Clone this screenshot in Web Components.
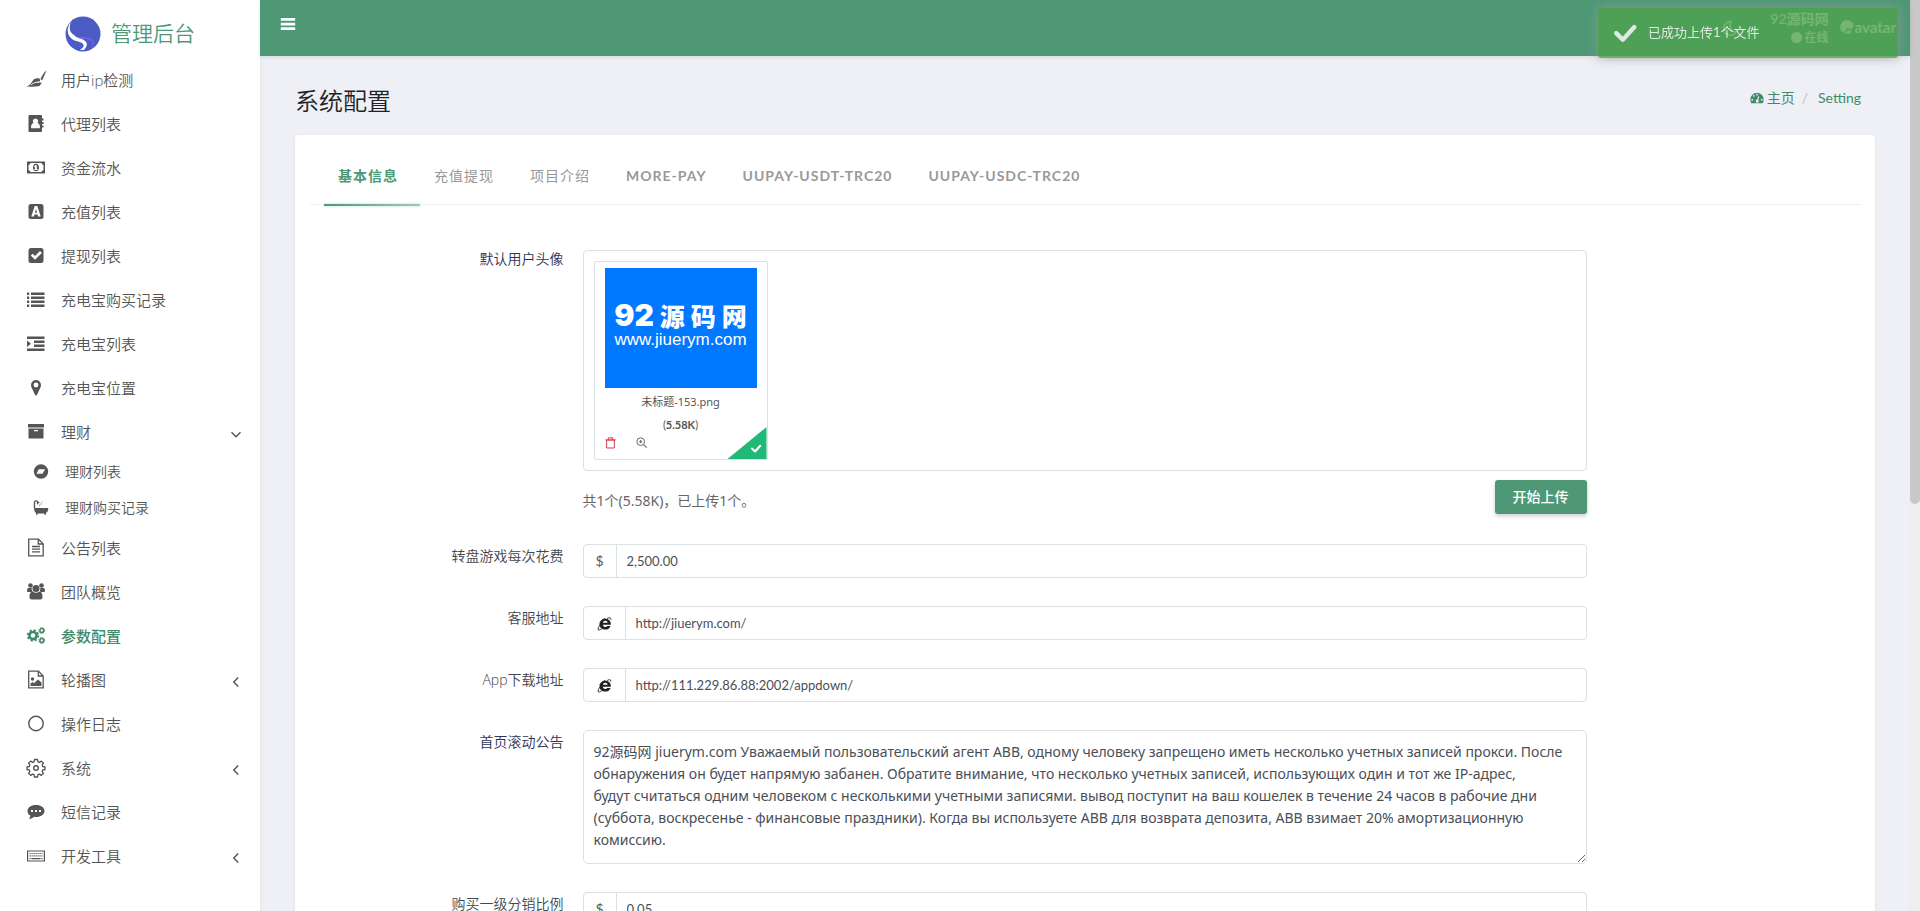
<!DOCTYPE html>
<html lang="zh-CN">
<head>
<meta charset="utf-8">
<meta name="viewport" content="width=device-width, initial-scale=1">
<title>系统配置</title>
<style>
:root {
  --primary: #4e9876;
  --link: #3f8a68;
  --text: #555;
  --line: #d9e1e4;
  --page: #eff0f6;
  --ui: "Lato", "Noto Sans CJK SC", sans-serif;
  --cyr: "Noto Sans", "Noto Sans CJK SC", sans-serif;
  --thin: "Open Sans", "Noto Sans CJK SC", sans-serif;
}
html, body { height: 100%; margin: 0; }
body { background: var(--page); color: var(--text); font: 14px/20px var(--ui); overflow: hidden; }
</style>
</head>
<body>
<admin-app></admin-app>

<script>
const ICONS = {
  lizard: '<path d="M0 16.500c3.500-.8 5-3 6.500-5.500C8 8.500 10.500 8 13.500 8.500c.5 1 .7 1.800.5 2.800l-4 1.200c2 0 4.500-.2 6 .5-1 .8-1.500 1.500-2.500 3-4 .8-9 .7-13.500.5zM14.500 9c1.500-3 3-6.500 6-8.500-1.500 3-2.800 7-4.500 10z"/><path d="M5 15c2-2 5-3 8-3" stroke="#fff" fill="none"/>',
  contact: '<path fill-rule="evenodd" d="M3.500 1H15a1 1 0 0 1 1 1v2.500h1.500v2H16v1.500h1.500v2H16v1.500h1.500v2H16V17a1 1 0 0 1-1 1H3.500a1 1 0 0 1-1-1V2a1 1 0 0 1 1-1zM9.500 4.500a2.700 2.700 0 0 0-2 4.500C6 9.500 5 11 5 13.500q0 .8.8.8h7.400q.8 0 .8-.8c0-2.500-1-4-2.500-4.500a2.700 2.700 0 0 0-2-4.500z"/>',
  money: '<path fill-rule="evenodd" d="M1 3.500h18v12H1zM4.500 5A2.500 2.500 0 0 1 2.500 7v5a2.500 2.500 0 0 1 2 2h11a2.500 2.500 0 0 1 2-2V7a2.500 2.500 0 0 1-2-2z"/><path fill-rule="evenodd" d="M10 5.800c1.900 0 3 1.600 3 3.700s-1.100 3.700-3 3.700-3-1.600-3-3.700 1.100-3.700 3-3.700zM9.700 7 8 8.300v.9l1-.2v2.200h-.8v.8h3.500v-.8h-.9V7z"/>',
  letter: '<path fill-rule="evenodd" d="M5 2h10a2.500 2.500 0 0 1 2.500 2.500v10A2.500 2.500 0 0 1 15 17H5a2.500 2.500 0 0 1-2.500-2.500v-10A2.500 2.500 0 0 1 5 2zM8.700 4 5.300 14.500h2.600l.5-2h3.200l.5 2h2.600L11.300 4zM10 7l1.100 3.800H8.900z"/>',
  check: '<path fill-rule="evenodd" d="M5 2h10a2.500 2.500 0 0 1 2.500 2.500v10A2.500 2.500 0 0 1 15 17H5a2.500 2.500 0 0 1-2.500-2.500v-10A2.500 2.500 0 0 1 5 2zM14 5l-5 5-2.300-2.300L4.800 9.600 9 13.800l6.900-6.900z"/>',
  list: '<path d="M1 2.500h2.200v2.400H1zM5 2.500h13.500v2.400H5zM1 6.500h2.200v2.400H1zM5 6.500h13.500v2.400H5zM1 10.500h2.200v2.400H1zM5 10.500h13.500v2.400H5zM1 14.500h2.200v2.400H1zM5 14.500h13.500v2.400H5z"/>',
  indent: '<path d="M1 2.500h17.500v2.400H1zM8 6.500h10.500v2.400H8zM8 10.500h10.500v2.400H8zM1 14.500h17.500v2.400H1zM1 6.500l4 3.200-4 3.200z"/>',
  pin: '<path fill-rule="evenodd" d="M10 2a5 5 0 0 1 5 5c0 2-1 3-1.500 4.500L10.900 17q-.9 1.200-1.800 0L6.500 11.500C6 10 5 9 5 7a5 5 0 0 1 5-5zm0 2.500a2.400 2.400 0 1 0 0 4.900 2.400 2.400 0 0 0 0-4.900z"/>',
  archive: '<path d="M2 2h16v3.500H2z"/><path fill-rule="evenodd" d="M2.500 6.500h15v10h-15zM8 8v1.200h4V8z"/>',
  compass: '<path fill-rule="evenodd" d="M10 1.500a8 8 0 1 0 0 16 8 8 0 0 0 0-16zM7.500 7h7l-2.800 5H5z"/>',
  bath: '<path d="M2 10h16v1.500c0 2-1.200 3.500-2.500 4v2h-1.700v-1.500H6.200v1.500H4.500v-2C3.200 15 2.500 13.500 2.500 11.500zM2 10V4c0-3 4-3.500 5-1l1.700.4-2.900 3C5 5 5.200 4 5.800 3.200 5 2.200 3.500 2.600 3.500 4v6z"/><path d="M8 6.500h1v1H8zM9.500 5h1v1h-1zM10.500 3h1v1h-1z"/>',
  file: '<path d="M2.700 1.200h9.800l4.700 4.700v11.900H2.700zM12.300 1.500V6H17M6 8.500h8M6 11.200h8M6 13.900h8" fill="none" stroke="currentColor" stroke-width="1.300"/>',
  users: '<circle cx="4.500" cy="3.500" r="2.300"/><circle cx="15.500" cy="3.500" r="2.300"/><circle cx="10" cy="6.500" r="3.500"/><path d="M1 9c0-2 .5-3 1.500-3h3.200c0 2 .3 3 1.300 4H2q-1 0-1-1zM19 9c0-2-.5-3-1.500-3h-3.200c0 2-.3 3-1.300 4h5q1 0 1-1zM3.500 15c0-3 .8-5.500 3.300-5.500 2 1.600 4.400 1.600 6.400 0 2.500 0 3.300 2.500 3.300 5.500q0 2.500-2.500 2.500H6q-2.500 0-2.500-2.500z"/>',
  cogs: '<circle cx="7" cy="9.500" r="3.600" fill="none" stroke="currentColor" stroke-width="2.500"/><circle cx="7" cy="9.500" r="5.300" fill="none" stroke="currentColor" stroke-width="1.800" stroke-dasharray="2.200 1.960"/><circle cx="15.800" cy="4.500" r="1.900" fill="none" stroke="currentColor" stroke-width="1.500"/><circle cx="15.800" cy="4.500" r="2.900" fill="none" stroke="currentColor" stroke-dasharray="1.300 .98"/><circle cx="15.800" cy="14.500" r="1.900" fill="none" stroke="currentColor" stroke-width="1.500"/><circle cx="15.800" cy="14.500" r="2.900" fill="none" stroke="currentColor" stroke-dasharray="1.300 .98"/>',
  image: '<path d="M2.700 1.200h9.800l4.700 4.700v11.900H2.700zM12.300 1.500V6H17" fill="none" stroke="currentColor" stroke-width="1.300"/><circle cx="6.500" cy="9" r="1.700"/><path d="M4.500 16v-2.500l2-1.500 1.500 1.300L12 9.500l3.500 3V16z"/>',
  circle: '<circle cx="10" cy="9.500" r="7.200" fill="none" stroke="currentColor" stroke-width="1.400"/>',
  gear: '<path d="M8.500 1.500h3l.5 2.300 1.300.6 2-1.300 2.100 2.100-1.300 2 .6 1.300 2.300.5v2.500l-2.300.5-.6 1.300 1.300 2-2.100 2.100-2-1.300-1.300.6-.5 2.300h-3L8 16.700l-1.300-.6-2 1.300-2.100-2.100 1.300-2-.6-1.300L1 11.500V9l2.300-.5.6-1.300-1.300-2 2.100-2.100 2 1.300L8 3.800z" fill="none" stroke="currentColor" stroke-width="1.300" stroke-linejoin="round"/><circle cx="10" cy="10" r="2.300" fill="none" stroke="currentColor" stroke-width="1.400"/>',
  comment: '<path fill-rule="evenodd" d="M10 3c5 0 8.500 2.600 8.500 6s-3.500 6-8.500 6q-1 0-2-.2C6.500 16.200 4.500 17 2.800 17c1-1 1.500-2 1.500-3.400C2.500 12.500 1.500 11 1.500 9 1.500 5.600 5 3 10 3zM5 8v2h2V8zm4 0v2h2V8zm4 0v2h2V8z"/>',
  keyboard: '<path d="M1.600 5h16.800v10H1.600z" fill="none" stroke="currentColor" stroke-width="1.200"/><path d="M3.500 7.500h13M3.500 9.800h13" stroke="currentColor" stroke-width="1.200" stroke-dasharray="1.200 .8"/><path d="M3.500 12h1.200v1.200H3.500zM5.500 12h9v1.200h-9zM15.300 12h1.200v1.200h-1.200z"/>',
  down: '<path d="M5 8l5 5 5-5" fill="none" stroke="currentColor" stroke-width="1.600"/>',
  left: '<path d="M12.500 5l-5 5 5 5" fill="none" stroke="currentColor" stroke-width="1.600"/>',
  bars: '<path d="M1 2.500h18v3.500H1zM1 8.300h18v3.500H1zM1 14h18v3.500H1z"/>',
  tick: '<path d="M2 11l6 6L18.500 5.500" fill="none" stroke="currentColor" stroke-width="4" stroke-linecap="round" stroke-linejoin="round"/>',
  moon: '<path d="M11 2a8.500 8.500 0 1 0 7 12.500C12 16 8 9 11 2z" fill="none" stroke="currentColor" stroke-width="2"/>',
  dot: '<circle cx="10" cy="10" r="10"/>',
  dash: '<path fill-rule="evenodd" d="M10 2.500a9.500 9.500 0 0 1 9.500 9.500q0 3-1.500 5.500H2Q.5 15 .5 12A9.500 9.500 0 0 1 10 2.500zM9 4v2.600h2V4zM4 6.700 5.800 8.500 7 7 5.300 5.300zM2 11.500v2.200h2.500v-2.200zM15.500 11.500v2.200H18v-2.200zM11.800 7.500l-1.600 4.800a2.200 2.200 0 1 0 1.500.4l1.600-4.800z"/>',
  trash: '<path d="M3 5.500h14V20H3zM.5 5.300h19M6 5V1.500h8V5" fill="none" stroke="currentColor" stroke-width="1.800"/>',
  zoom: '<circle cx="8.500" cy="8.500" r="7" fill="none" stroke="currentColor" stroke-width="1.800"/><path d="M13.500 13.500l6 6M8.500 5.500v6M5.500 8.500h6" stroke="currentColor" stroke-width="2" fill="none"/>',
  broken: '<path d="M10 1.500a8.500 8.500 0 0 1 8.500 8L15 13l-4-2-5 6.500A8.500 8.500 0 0 1 10 1.500z"/><path d="M7 18l5-5 4 2.500-3 3z"/>',
  ie: '<path d="M18.500 11.500H8c.1 2 1.200 3 3 3 1.300 0 2.100-.4 2.600-1.300h4.500C17 16.500 14.500 18 11 18c-4.500 0-7.500-2.600-7.500-6.800 0-4.500 3.200-7.700 7.700-7.700 4.800 0 7.500 3.200 7.300 8zM14.100 9c-.2-1.700-1.300-2.600-3-2.600S8.300 7.300 8 9z"/><path d="M13.500 3.300c3-1.700 5.500-1.300 5 1.700M4.500 11C1.500 15.500.6 18.500 2.300 18.700c1 .1 2.500-.6 4-1.700M3.500 9.500C5 6.500 8 4 11 3.500" fill="none" stroke="currentColor" stroke-width="1.200"/>'
};

const define = (name, html, setup) => {
  const template = document.createElement('template');
  template.innerHTML = html;
  customElements.define(name, class extends HTMLElement {
    connectedCallback() {
      if (this.shadowRoot) return;
      this.attachShadow({ mode: 'open' }).append(template.content.cloneNode(true));
      if (setup) setup(this, this.shadowRoot);
    }
  });
};

define('ui-icon', `
<style>
:host { display: inline-block; width: 20px; height: 20px; flex: none; }
svg { display: block; width: 100%; height: 100%; overflow: visible; }
</style>
<svg viewBox="0 0 20 20" fill="currentColor" aria-hidden="true"></svg>`,
(host, root) => { root.querySelector('svg').innerHTML = ICONS[host.getAttribute('name')] || ''; });

define('nav-item', `
<style>
:host { display: block; }
a { display: flex; align-items: center; height: 44px; padding: 0 15px 0 26px; color: var(--text); text-decoration: none; font-family: var(--thin); font-size: 15px; font-weight: 350; }
.label { flex: 1; margin-left: 15px; }
.arrow { width: 18px; height: 18px; margin-top: 4px; }
:host([sub]) a { height: 36px; padding-left: 32px; font-size: 14px; }
:host([sub]) .main { width: 18px; height: 18px; }
:host([active]) a { color: var(--link); font-weight: 500; }
</style>
<a href="#"><span class="label"><slot></slot></span></a>`,
(host, root) => {
  const link = root.querySelector('a');
  const icon = (name, cls) => {
    const el = document.createElement('ui-icon');
    el.className = cls;
    el.setAttribute('name', name);
    return el;
  };
  link.prepend(icon(host.getAttribute('icon'), 'main'));
  if (host.hasAttribute('arrow')) link.append(icon(host.getAttribute('arrow'), 'arrow'));
});

define('app-sidebar', `
<style>
:host { display: block; background: #fff; box-shadow: 0 0 4px rgba(0,0,0,.08); overflow: hidden; }
.brand { display: flex; align-items: center; justify-content: center; gap: 10px; height: 58px; padding: 7px 0 0; box-sizing: border-box; color: var(--primary); font-size: 21px; line-height: 30px; font-weight: 350; text-decoration: none; }
.brand svg { width: 36px; height: 36px; margin-top: 3px; }
nav { display: block; }
</style>
<a class="brand" href="#">
  <svg viewBox="0 0 36 36" aria-hidden="true"><circle cx="18" cy="18" r="17.500" fill="#4b5cc4"/><path d="M6 20c5 4 10 2 16 3 6 1 7 4 4 9 4-3 4-9-2-10-6-2-14 1-18-6z" fill="#7b61f0"/><path d="M6 6C1 12 2 19 7 23c4 3 9 2 11 5 2 3-1 4-3 6h4c3-3 4-7 1-9-3-3-8-2-11-6C4 16 4 11 6 6z" fill="#fff"/></svg>
  <span>管理后台</span>
</a>
<nav aria-label="主菜单">
  <nav-item icon="lizard">用户ip检测</nav-item>
  <nav-item icon="contact">代理列表</nav-item>
  <nav-item icon="money">资金流水</nav-item>
  <nav-item icon="letter">充值列表</nav-item>
  <nav-item icon="check">提现列表</nav-item>
  <nav-item icon="list">充电宝购买记录</nav-item>
  <nav-item icon="indent">充电宝列表</nav-item>
  <nav-item icon="pin">充电宝位置</nav-item>
  <nav-item icon="archive" arrow="down">理财</nav-item>
  <nav-item icon="compass" sub>理财列表</nav-item>
  <nav-item icon="bath" sub>理财购买记录</nav-item>
  <nav-item icon="file">公告列表</nav-item>
  <nav-item icon="users">团队概览</nav-item>
  <nav-item icon="cogs" active>参数配置</nav-item>
  <nav-item icon="image" arrow="left">轮播图</nav-item>
  <nav-item icon="circle">操作日志</nav-item>
  <nav-item icon="gear" arrow="left">系统</nav-item>
  <nav-item icon="comment">短信记录</nav-item>
  <nav-item icon="keyboard" arrow="left">开发工具</nav-item>
</nav>`);

define('app-header', `
<style>
:host { display: flex; align-items: center; height: 56px; box-sizing: border-box; padding: 0 14px 0 20px; background: var(--primary); color: #fff; box-shadow: 0 1px 4px rgba(0,0,0,.1); z-index: 1; }
button { display: block; border: 0; padding: 0; background: none; color: inherit; height: 16px; }
button ui-icon { width: 16px; height: 16px; }
.menu { margin-bottom: 8px; }
.night { margin-left: auto; }
.user { display: grid; justify-items: end; margin: 0 10px 0 32px; font-size: 14px; font-weight: 600; line-height: 19px; }
.state { display: flex; align-items: center; gap: 3px; font-size: 12px; }
.state ui-icon { width: 11px; height: 11px; }
.avatar { display: flex; align-items: center; font-size: 15px; font-weight: 700; margin-bottom: 2px; }
.avatar ui-icon { width: 16px; height: 16px; }
</style>
<button class="menu" type="button" aria-label="菜单"><ui-icon name="bars"></ui-icon></button>
<button class="night" type="button" aria-label="夜间模式"><ui-icon name="moon"></ui-icon></button>
<div class="user"><span>92源码网</span><span class="state"><ui-icon name="dot"></ui-icon>在线</span></div>
<div class="avatar"><ui-icon name="broken"></ui-icon><span>avatar</span></div>`);

define('toast-message', `
<style>
:host { position: fixed; top: 8px; right: 22px; z-index: 5; display: flex; align-items: center; gap: 10px; box-sizing: border-box; width: 300px; height: 50px; padding: 0 14px 2px; border-radius: 3px; background: #51a351; color: #fff; opacity: .8; box-shadow: 0 0 12px #999; font-size: 13px; }
ui-icon { width: 26px; height: 22px; }
</style>
<ui-icon name="tick"></ui-icon><span role="status"><slot></slot></span>`);

define('page-heading', `
<style>
:host { display: flex; align-items: center; justify-content: space-between; height: 79px; padding: 0 14px 0 0; box-sizing: border-box; }
h1 { margin: 10px 0 0; font-size: 24px; line-height: 34px; font-weight: 350; color: #222; }
nav { display: flex; align-items: center; gap: 3px; margin-top: 5px; }
a, ui-icon { color: var(--link); text-decoration: none; }
ui-icon { width: 14px; height: 14px; }
i { font-style: normal; color: #b5bec8; margin: 0 7px 0 4px; }
</style>
<h1>系统配置</h1>
<nav aria-label="面包屑"><ui-icon name="dash"></ui-icon><a href="#">主页</a><i>/</i><a href="#">Setting</a></nav>`);

define('tab-bar', `
<style>
:host { display: flex; border-bottom: 1px solid #f1f1f1; padding: 0 14px; height: 69px; box-sizing: border-box; }
</style>
<slot></slot>`);

define('tab-item', `
<style>
:host { display: flex; }
a { display: flex; align-items: center; position: relative; padding: 12px 22px 0 14px; color: #999; text-decoration: none; font-size: 14px; letter-spacing: 1px; font-weight: 700; text-transform: uppercase; }
:host([cjk]) a { font-weight: 400; }
:host([active]) a { color: var(--primary); font-weight: 600; }
:host([active]) a::after { content: ""; position: absolute; left: 0; right: 0; bottom: -2px; height: 2px; background: linear-gradient(90deg, var(--primary), #a3c9b7); box-shadow: 0 0 3px rgba(78,152,118,.4); }
</style>
<a href="#"><slot></slot></a>`);

const ROW = `
:host { display: block; margin-bottom: 28px; }
.row { display: grid; grid-template-columns: minmax(0,2fr) minmax(0,8fr) minmax(0,2fr); }
.label { justify-self: end; padding: 2px 5px 0 0; color: #414750; line-height: 20px; font-family: var(--thin); font-weight: 350; }
:host([strong]) .label { color: #2c3357; }
.field { margin: 0 16px 0 14px; }
`;

define('text-field', `
<style>${ROW}
.group { display: flex; height: 34px; box-sizing: border-box; border: 1px solid var(--line); border-radius: 4px; background: #fff; overflow: hidden; }
.addon { display: flex; align-items: center; justify-content: center; width: 32px; border-right: 1px solid var(--line); color: #555; }
.addon.wide { width: 41px; color: #222; }
.addon ui-icon { width: 15px; height: 15px; }
input { flex: 1; min-width: 0; border: 0; outline: 0; padding: 0 10px; background: none; color: #4a4f57; font: 13px/20px var(--ui); }
</style>
<div class="row"><label class="label" for="f"></label><div class="field"><div class="group"><span class="addon"></span><input id="f" type="text"></div></div></div>`,
(host, root) => {
  root.querySelector('label').textContent = host.getAttribute('label');
  root.querySelector('input').value = host.getAttribute('value');
  const addon = root.querySelector('.addon');
  if (host.hasAttribute('web')) {
    addon.classList.add('wide');
    addon.innerHTML = '<ui-icon name="ie"></ui-icon>';
  } else addon.textContent = '$';
});

define('area-field', `
<style>${ROW}
textarea { display: block; width: 100%; height: 134px; box-sizing: border-box; margin: 0; padding: 10px; border: 1px solid var(--line); border-radius: 5px; outline: 0; resize: vertical; overflow: hidden; color: #4a4f57; font: 14px/22px var(--cyr); }
</style>
<div class="row"><label class="label" for="f"></label><div class="field"><textarea id="f"></textarea></div></div>`,
(host, root) => {
  root.querySelector('label').textContent = host.getAttribute('label');
  root.querySelector('textarea').value = host.textContent.trim();
});

define('upload-field', `
<style>${ROW}
:host { margin-bottom: 30px; }
.box { margin-top: 3px; border: 1px solid var(--line); border-radius: 4px; padding: 10px; }
figure { position: relative; box-sizing: border-box; width: 174px; height: 199px; margin: 0; padding: 6px 10px; border: 1px solid var(--line); border-radius: 2px; }
.thumb { display: flex; flex-direction: column; align-items: center; justify-content: center; gap: 3px; height: 120px; padding-bottom: 4px; box-sizing: border-box; background: #0078ff; color: #fff; font: 17px/18px "Liberation Sans", sans-serif; }
.mark { display: flex; align-items: center; gap: 6px; font: 900 25px/25px "Noto Sans CJK SC", sans-serif; }
.mark b { font: 900 30px/25px "Inter", sans-serif; }
figcaption { display: grid; justify-items: center; font-size: 11px; line-height: 23px; padding-top: 2px; }
figcaption span:first-child { font-family: var(--cyr); }
.tools { display: flex; gap: 20px; margin-top: 1px; }
.tools button { display: flex; border: 0; padding: 0; background: none; color: #666; }
.tools .del { color: #d9394a; }
.tools ui-icon { width: 11px; height: 11px; }
.done { position: absolute; right: 0; bottom: 0; width: 39px; height: 32px; background: #21b978; clip-path: polygon(100% 0, 100% 100%, 0 100%); color: #fff; }
.done ui-icon { position: absolute; right: 6px; bottom: 6px; width: 10px; height: 10px; }
.foot { display: flex; align-items: center; justify-content: space-between; margin-top: 9px; color: #666; font-family: var(--cyr); }
.go { height: 34px; width: 92px; border: 0; border-radius: 3px; background: var(--primary); color: #fff; font: 500 14px/20px var(--ui); box-shadow: 0 2px 4px rgba(0,0,0,.2); padding: 0; }
.foot span { padding-top: 7px; }
</style>
<div class="row"><label class="label" for="go">默认用户头像</label><div class="field">
<div class="box"><figure>
<div class="thumb"><div class="mark"><b>92</b><span>源</span><span>码</span><span>网</span></div><span>www.jiuerym.com</span></div>
<figcaption><span>未标题-153.png</span><span>(<b>5.58K</b>)</span></figcaption>
<div class="tools"><button class="del" type="button" aria-label="删除"><ui-icon name="trash"></ui-icon></button><button type="button" aria-label="预览"><ui-icon name="zoom"></ui-icon></button></div>
<div class="done"><ui-icon name="tick"></ui-icon></div>
</figure></div>
<div class="foot"><span>共1个(5.58K)，已上传1个。</span><button id="go" class="go" type="button">开始上传</button></div>
</div></div>`);

define('scroll-rail', `
<style>
:host { display: block; background: #eee; }
div { height: 504px; max-height: 60%; border-radius: 0 0 5px 5px; background: #c8c8c8; }
</style>
<div></div>`);

define('admin-app', `
<style>
:host { display: grid; grid-template-columns: 260px minmax(0,1fr) 10px; height: 100vh; }
.main { display: flex; flex-direction: column; min-width: 0; min-height: 0; }
app-header { flex: none; }
main { flex: 1; min-height: 0; overflow: auto; scrollbar-width: none; padding: 0 35px; }
.card { background: #fff; border-radius: 4px; box-shadow: 0 1px 4px rgba(0,0,0,.06); padding: 1px 14px 20px 15px; }
form { margin: 42px 0 0; }
</style>
<app-sidebar></app-sidebar>
<div class="main">
  <app-header></app-header>
  <main>
    <page-heading></page-heading>
    <section class="card">
      <tab-bar>
        <tab-item cjk active>基本信息</tab-item>
        <tab-item cjk>充值提现</tab-item>
        <tab-item cjk>项目介绍</tab-item>
        <tab-item>More-pay</tab-item>
        <tab-item>UUPAY-USDT-TRC20</tab-item>
        <tab-item>UUPAY-USDC-TRC20</tab-item>
      </tab-bar>
      <form>
        <upload-field strong></upload-field>
        <text-field label="转盘游戏每次花费" value="2,500.00"></text-field>
        <text-field web label="客服地址" value="http://jiuerym.com/"></text-field>
        <text-field web label="App下载地址" value="http://111.229.86.88:2002/appdown/"></text-field>
        <area-field strong label="首页滚动公告">92源码网 jiuerym.com Уважаемый пользовательский агент ABB, одному человеку запрещено иметь несколько учетных записей прокси. После
обнаружения он будет напрямую забанен. Обратите внимание, что несколько учетных записей, использующих один и тот же IP-адрес,
будут считаться одним человеком с несколькими учетными записями. вывод поступит на ваш кошелек в течение 24 часов в рабочие дни
(суббота, воскресенье - финансовые праздники). Когда вы используете ABB для возврата депозита, ABB взимает 20% амортизационную
комиссию.</area-field>
        <text-field label="购买一级分销比例" value="0.05"></text-field>
      </form>
    </section>
  </main>
</div>
<scroll-rail></scroll-rail>
<toast-message>已成功上传1个文件</toast-message>`);
</script>
</body>
</html>
